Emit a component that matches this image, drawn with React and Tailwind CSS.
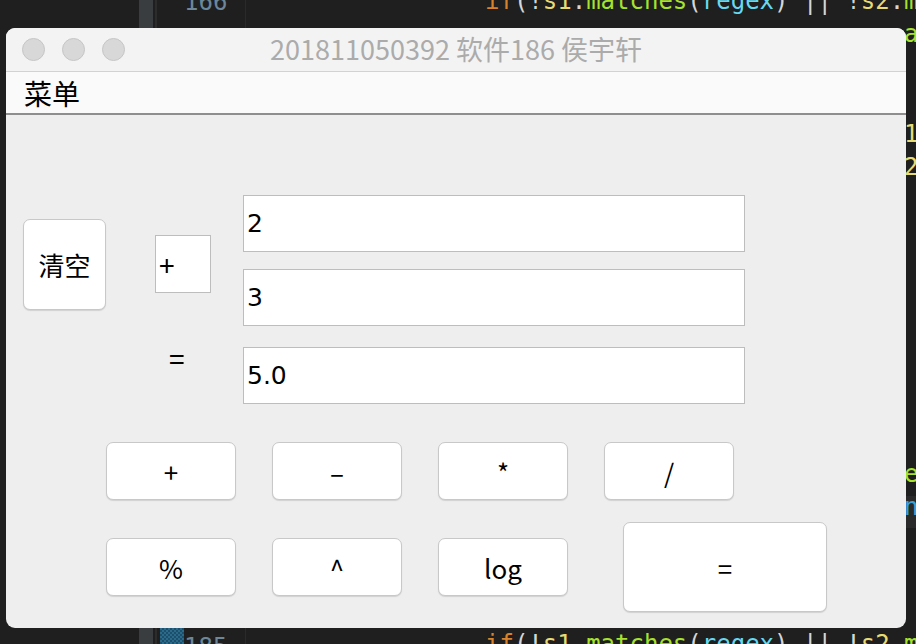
const mono = { fontFamily: '"DejaVu Sans Mono", "Liberation Mono", monospace' };

function CodeLine({ className }) {
  return (
    <div className={"absolute left-[485px] whitespace-nowrap text-[24px] leading-[28px] " + className} style={mono}>
      <span className="text-[#d9822b]">if</span>
      <span className="text-[#d6d6d6]">(!</span>
      <span className="text-[#e6db74]">s1</span>
      <span className="text-[#d6d6d6]">.</span>
      <span className="text-[#a6e22e]">matches</span>
      <span className="text-[#d6d6d6]">(</span>
      <span className="text-[#66d9ef]">regex</span>
      <span className="text-[#d6d6d6]">) || !</span>
      <span className="text-[#e6db74]">s2</span>
      <span className="text-[#d6d6d6]">.</span>
      <span className="text-[#a6e22e]">m</span>
    </div>
  );
}

function Editor() {
  return (
    <div className="absolute inset-0 bg-[#1f1f1f]">
      <div className="absolute left-[139px] top-0 h-full w-[14px] bg-[#3a3d40]" />
      <div className="absolute left-[155px] top-0 h-full w-[2px] bg-[#2c2c2c]" />
      <div className="absolute left-[245px] top-0 h-full w-[1px] bg-[#2a2a2a]" />
      <div className="absolute left-[184px] top-[-12px] text-[24px] leading-[28px] text-[#6b8799]" style={mono}>166</div>
      <CodeLine className="top-[-13px]" />
      <div className="absolute left-[160px] top-[628px] h-[16px] w-[24px] bg-[repeating-conic-gradient(#1d4f6b_0%_25%,#2a6a8a_0%_50%)] bg-[length:4px_4px]" />
      <div className="absolute left-[184px] top-[633px] text-[24px] leading-[28px] text-[#6b8799]" style={mono}>185</div>
      <CodeLine className="top-[630px]" />
      <div className="absolute left-[904px] top-[20px] text-[24px] leading-[28px] text-[#a6e22e]" style={mono}>a</div>
      <div className="absolute left-[904px] top-[120px] text-[24px] leading-[28px] text-[#e6db74]" style={mono}>1</div>
      <div className="absolute left-[904px] top-[153px] text-[24px] leading-[28px] text-[#e6db74]" style={mono}>2</div>
      <div className="absolute left-[904px] top-[460px] text-[24px] leading-[28px] text-[#a6e22e]" style={mono}>e</div>
      <div className="absolute left-[900px] top-[496px] h-[32px] w-[16px] bg-[#2a2a2a]" />
      <div className="absolute left-[904px] top-[493px] text-[24px] leading-[28px] text-[#3aa0d8]" style={mono}>n</div>
    </div>
  );
}

function Btn({ label, className = "w-[130px] h-[58px]" }) {
  return (
    <button
      className={
        "flex items-center justify-center rounded-[7px] border border-[#c8c8c8] bg-white text-[26px] text-black shadow-[0_1px_1px_rgba(0,0,0,0.12)] " +
        className
      }
    >
      {label}
    </button>
  );
}

function Field({ value }) {
  return (
    <div
      className="flex h-[57px] w-[502px] items-center border border-[#bdbdbd] bg-white pl-[3px] text-[25px] text-black"
      style={{ fontFamily: '"DejaVu Sans", "Noto Sans", sans-serif' }}
    >
      {value}
    </div>
  );
}

export default function App() {
  return (
    <div
      className="relative h-[644px] w-[916px] overflow-hidden"
      style={{ fontFamily: '"Noto Sans CJK SC", "Noto Sans", sans-serif' }}
    >
      <Editor />

      <div className="absolute left-[6px] top-[28px] flex h-[600px] w-[900px] flex-col overflow-hidden rounded-[9px] bg-[#eeeeee]">
        {/* title bar */}
        <div className="relative flex h-[44px] shrink-0 items-center border-b border-[#d2d2d2] bg-[#f3f3f3] pl-[16px]">
          <div className="flex gap-[17px]">
            <span className="h-[23px] w-[23px] rounded-full border border-[#c6c6c6] bg-[#d8d8d8]" />
            <span className="h-[23px] w-[23px] rounded-full border border-[#c6c6c6] bg-[#d8d8d8]" />
            <span className="h-[23px] w-[23px] rounded-full border border-[#c6c6c6] bg-[#d8d8d8]" />
          </div>
          <div className="absolute inset-0 flex items-center justify-center text-[27px] text-[#ababab]">
            201811050392 软件186 侯宇轩
          </div>
        </div>

        {/* menu bar */}
        <div className="flex h-[43px] shrink-0 items-center border-b-2 border-[#8e8e8e] bg-[#fafafa] pl-[18px] text-[28px] text-black">
          菜单
        </div>

        {/* content */}
        <div className="flex flex-1 flex-col pl-[17px] pt-[80px]">
          <div className="flex items-start">
            <Btn label="清空" className="mt-[24px] h-[91px] w-[83px] text-[26px]" />
            <div className="ml-[49px] flex w-[56px] flex-col">
              <div className="mt-[40px] flex h-[58px] w-[56px] items-center border border-[#bdbdbd] bg-white pl-[3px] text-[28px]">
                +
              </div>
              <div className="mt-[50px] flex h-[30px] items-center pl-[14px] text-[28px]">=</div>
            </div>
            <div className="ml-[32px] flex flex-col">
              <Field value="2" />
              <div className="mt-[17px]">
                <Field value="3" />
              </div>
              <div className="mt-[21px]">
                <Field value="5.0" />
              </div>
            </div>
          </div>

          <div className="ml-[83px] mt-[38px] flex items-center gap-[36px]">
            <Btn label="+" />
            <Btn label="–" />
            <Btn label="*" />
            <Btn label="/" />
          </div>

          <div className="ml-[83px] mt-[22px] flex items-center gap-[36px]">
            <Btn label="%" />
            <Btn label="^" />
            <Btn label="log" />
            <Btn label="=" className="ml-[19px] h-[90px] w-[204px]" />
          </div>
        </div>
      </div>
    </div>
  );
}
